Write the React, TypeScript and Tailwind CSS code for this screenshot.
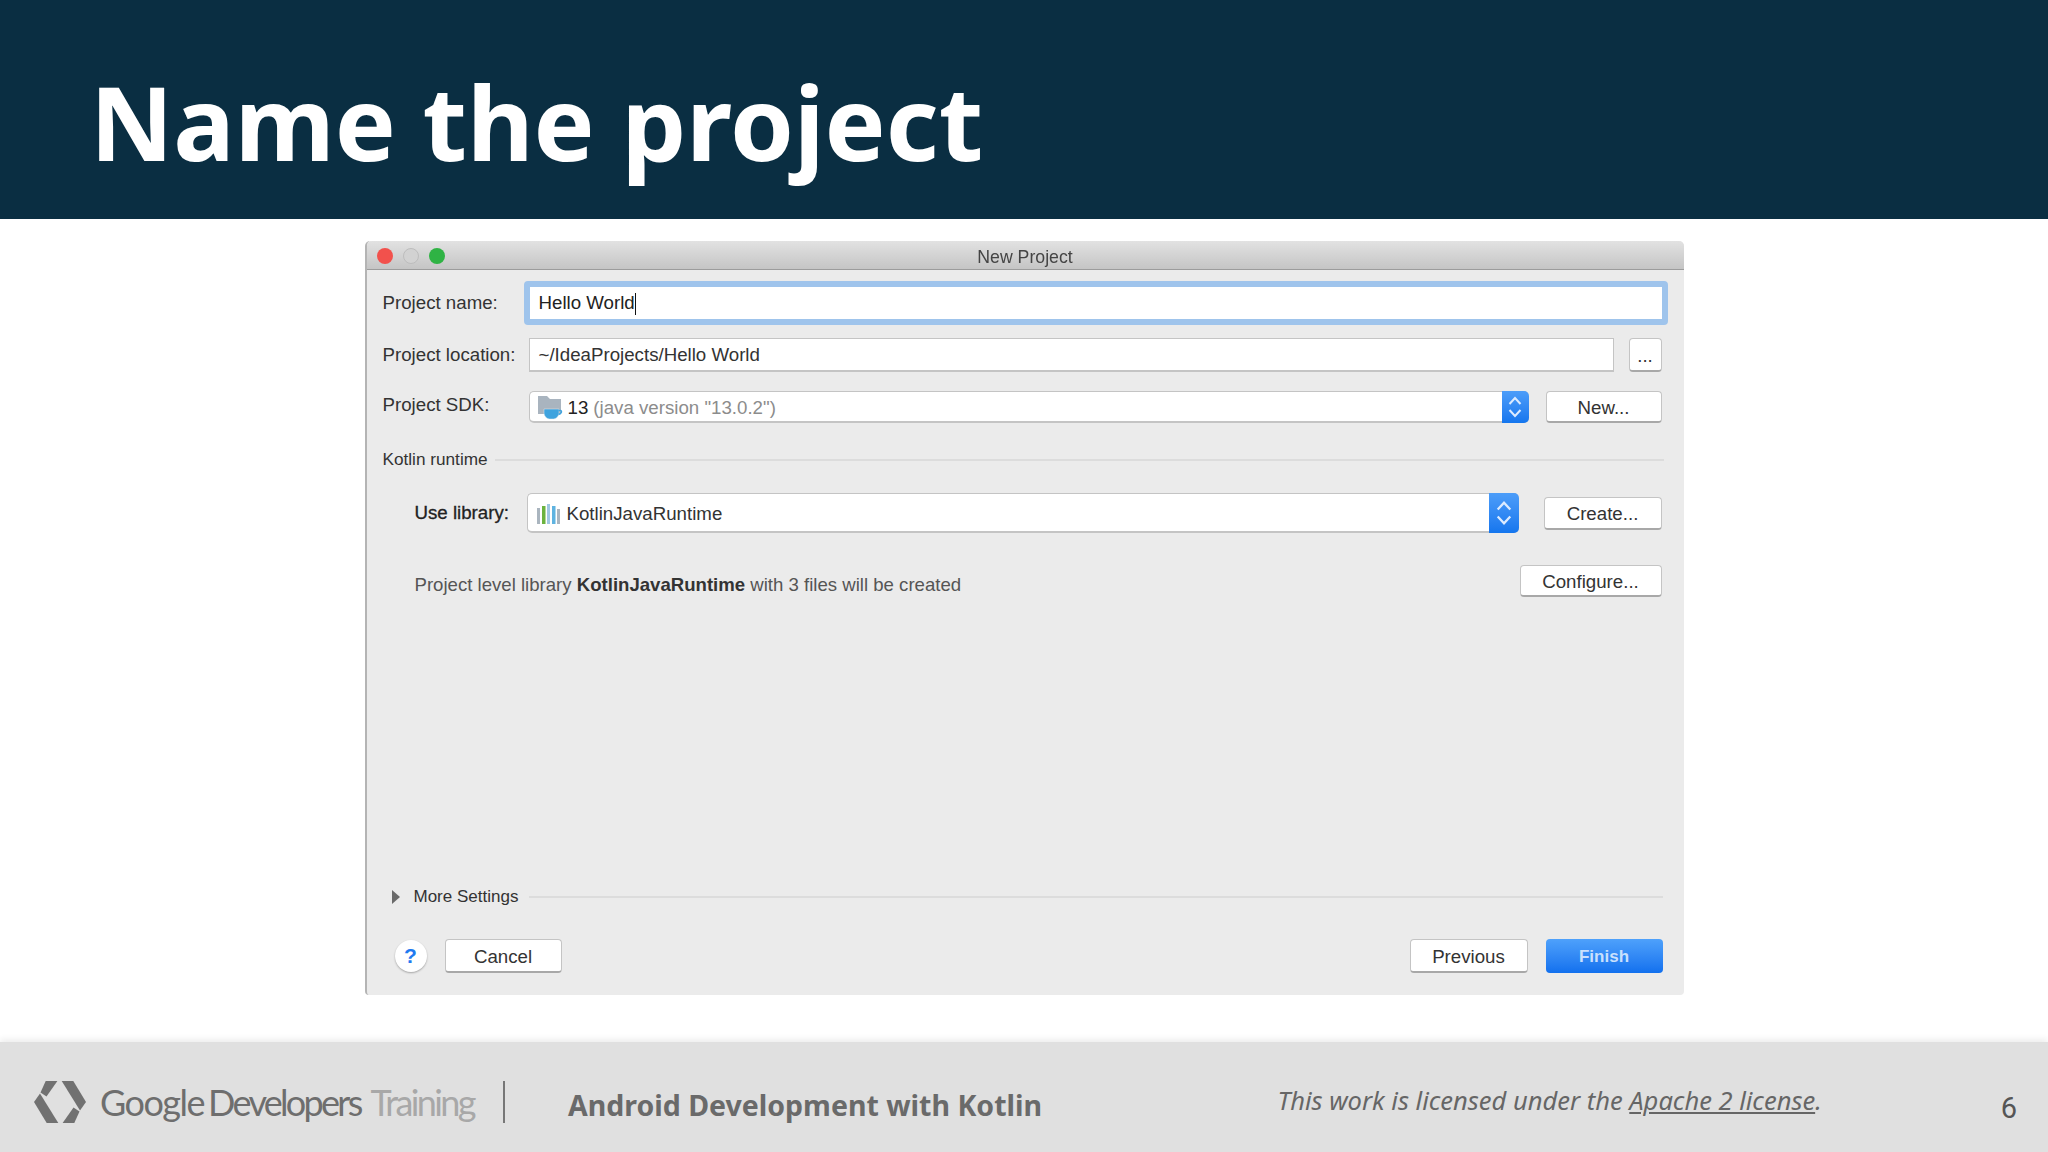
const dialogFont = "font-['Liberation_Sans',Arial,sans-serif]";
const slideFont = "font-['Noto_Sans','Open_Sans',sans-serif]";

function MacButton({ label, className }: { label: string; className: string }) {
  return (
    <button className={`flex items-center justify-center shrink-0 pt-[3px] rounded-[4px] bg-white border border-[#c4c4c4] border-b-[#a8a8a8] border-b-2 text-[18.7px] text-[#333] ${className}`}>
      {label}
    </button>
  );
}

function Stepper({ className, iconClass }: { className: string; iconClass: string }) {
  return (
    <div className={`flex items-center justify-center shrink-0 rounded-r-[5px] bg-gradient-to-b from-[#4c9df9] to-[#1476ee] ${className}`}>
      <svg viewBox="0 0 14 24" className={iconClass} fill="none" stroke="#dcebff" strokeWidth="2">
        <path d="M1.500 9 7 3l5.500 6" />
        <path d="M1.500 15 7 21l5.500-6" />
      </svg>
    </div>
  );
}

function FolderIcon() {
  return (
    <svg width="26" height="24" viewBox="0 0 26 24" className="shrink-0">
      <path d="M1 0h9l3 3h11v15H1z" fill="#a9b4bf" />
      <path d="M7 13h15v4c0 3-3 6-5.500 6h-4C10 23 7 20 7 17z" fill="#3fa3de" stroke="#ebebeb" strokeWidth="0.500" />
      <path d="M21.500 14.500h2c1.500 0 1.500 3.500-2 4" fill="none" stroke="#3fa3de" strokeWidth="1.500" />
    </svg>
  );
}

function LibraryIcon() {
  return (
    <svg width="24" height="20" viewBox="0 0 24 20" className="shrink-0">
      <rect x="0" y="4" width="3" height="16" fill="#aab5bf" />
      <rect x="5" y="2" width="3.500" height="18" fill="#6cb33f" />
      <rect x="10" y="0" width="3" height="20" fill="#9fc7e3" />
      <rect x="15" y="2" width="3.500" height="18" fill="#5fb3e0" />
      <rect x="20" y="5" width="3" height="15" fill="#aab5bf" />
    </svg>
  );
}

function GoogleDevLogo() {
  return (
    <svg width="52" height="42" viewBox="0 0 52 42" className="shrink-0">
      <path d="M11.700 0H23.400L12.500 15.500 6.500 11.500Z" fill="#717171" />
      <path d="M0 21 6 12.500 24.300 42H12.700Z" fill="#717171" />
      <path d="M52 21 46 29.500 27.700 0H39.300Z" fill="#717171" />
      <path d="M40.300 42H28.600L39.500 26.500 45.500 30.500Z" fill="#717171" />
    </svg>
  );
}

export default function App() {
  return (
    <div className="h-screen w-full flex flex-col bg-white overflow-hidden">
      {/* Title band */}
      <header className="h-[219px] shrink-0 bg-[#0a2e42] flex items-center pl-[90px]">
        <h1 className={`${slideFont} text-[102.5px] leading-none font-bold text-white pt-[23px]`}>Name the project</h1>
      </header>

      {/* Dialog screenshot */}
      <main className="flex-1 flex justify-center pt-[22px] min-h-0">
        <div className={`${dialogFont} blur-[0.4px] w-[1319px] h-[754px] flex flex-col bg-[#ebebeb] rounded-t-[5px] rounded-b-[4px] border-l-2 border-[#b4b4b4] text-[#333] text-[18.7px]`}>
          <div className="relative h-[29px] shrink-0 flex items-center justify-center pt-[5px] rounded-t-[5px] bg-gradient-to-b from-[#e2e2e2] to-[#c5c5c5] border-b border-[#9c9c9c] text-[17.7px] text-[#444]">
            <div className="absolute left-[10px] top-[7px] flex gap-[10px]">
              <span className="w-[16px] h-[16px] rounded-full bg-[#f2514c]" />
              <span className="w-[16px] h-[16px] rounded-full bg-[#d2d2d2] border border-[#bdbdbd]" />
              <span className="w-[16px] h-[16px] rounded-full bg-[#2fb344]" />
            </div>
            New Project
          </div>

          <div className="flex-1 flex flex-col pl-[16px] pr-[22px]">
            {/* Project name */}
            <div className="flex items-center mt-[11px] h-[44px]">
              <span className="w-[141px] shrink-0 pt-[1px]">Project name:</span>
              <div className="flex-1 h-[44px] mr-[-6px] flex items-center bg-white border-[6px] border-[#9fc4ec] rounded-[4px] pl-[9px] pt-[1px] text-[#222]">
                Hello World<span className="w-px h-[22px] bg-[#111]" />
              </div>
            </div>
            {/* Project location */}
            <div className="flex items-center mt-[13px] h-[34px]">
              <span className="w-[146px] shrink-0">Project location:</span>
              <div className="flex-1 h-[34px] flex items-center bg-white border border-[#c4c4c4] border-b-2 pl-[9px] pt-[1px] text-[#333]">~/IdeaProjects/Hello World</div>
              <MacButton label="..." className="w-[33px] h-[34px] ml-[15px]" />
            </div>
            {/* Project SDK */}
            <div className="flex items-center mt-[19px] h-[32px]">
              <span className="w-[146px] shrink-0 -mt-[3px]">Project SDK:</span>
              <div className="w-[1000px] h-[32px] flex items-center bg-white border border-[#c4c4c4] border-b-2 rounded-[5px] border-r-0">
                <div className="flex-1 flex items-center pl-[7px] gap-[5px] pt-[3px]">
                  <FolderIcon />
                  <span className="text-[#222]">13</span>
                  <span className="text-[#8c8c8c]">(java version "13.0.2")</span>
                </div>
                <Stepper className="w-[27px] h-[32px]" iconClass="w-[14px] h-[24px]" />
              </div>
              <MacButton label="New..." className="w-[116px] h-[32px] ml-[17px]" />
            </div>
            {/* Kotlin runtime separator */}
            <div className="flex items-center mt-[27px] h-[20px] text-[17.2px] mr-[-2px]">
              <span className="shrink-0 w-[112px]">Kotlin runtime</span>
              <div className="flex-1 h-[2px] bg-[#dcdcdc]" />
            </div>
            {/* Use library */}
            <div className="flex items-center mt-[23px] h-[40px]">
              <span className="w-[112px] shrink-0 ml-[32px] text-[#222] pt-[1px] [-webkit-text-stroke:0.3px_#222]">Use library:</span>
              <div className="w-[992px] h-[40px] flex items-center bg-white border border-[#c4c4c4] border-b-2 rounded-[5px] border-r-0">
                <div className="flex-1 flex items-center pl-[9px] gap-[6px] pt-[3px]">
                  <LibraryIcon />
                  <span className="text-[#333]">KotlinJavaRuntime</span>
                </div>
                <Stepper className="w-[30px] h-[40px]" iconClass="w-[16px] h-[28px]" />
              </div>
              <MacButton label="Create..." className="w-[118px] h-[33px] ml-[25px]" />
            </div>
            {/* Library info */}
            <div className="flex items-center justify-between mt-[32px] h-[32px] pl-[32px]">
              <span className="text-[#555] mt-[7px] text-[18.6px]">
                Project level library <b className="text-[#333]">KotlinJavaRuntime</b> with 3 files will be created
              </span>
              <MacButton label="Configure..." className="w-[142px] h-[32px]" />
            </div>

            <div className="flex-1" />

            {/* More settings */}
            <div className="flex items-center h-[20px] mb-[32px] mr-[-1px]">
              <span className="ml-[9px] w-0 h-0 border-y-[7px] border-y-transparent border-l-[8px] border-l-[#6a6a6a]" />
              <span className="ml-[14px] text-[17px] text-[#333]">More Settings</span>
              <div className="flex-1 h-[2px] bg-[#dcdcdc] ml-[11px]" />
            </div>
            {/* Footer buttons */}
            <div className="flex items-center mb-[22px] h-[34px] mr-[-1px]">
              <div className="ml-[12px] w-[32px] h-[32px] rounded-full bg-white shadow-[0_1px_2px_rgba(0,0,0,0.3)] flex items-center justify-center text-[#1f7af0] text-[21px] font-bold">?</div>
              <MacButton label="Cancel" className="w-[117px] h-[34px] ml-[18px]" />
              <div className="flex-1" />
              <MacButton label="Previous" className="w-[118px] h-[34px]" />
              <button className="w-[117px] h-[34px] ml-[18px] pt-[1px] rounded-[4px] bg-gradient-to-b from-[#4ea1fb] to-[#1170ee] text-[#c9e0fd] text-[17px] font-bold">Finish</button>
            </div>
          </div>
        </div>
      </main>

      {/* Slide footer */}
      <footer className={`${slideFont} h-[110px] shrink-0 bg-[#e0e0e0] shadow-[0_-3px_6px_rgba(0,0,0,0.07)] flex items-center pl-[34px] pt-[9px] text-[#666]`}>
        <GoogleDevLogo />
        <div className="ml-[14px] flex items-baseline font-['Lato',sans-serif] text-[36px] tracking-[-1.5px] whitespace-nowrap w-[403px] shrink-0">
          <span className="text-[#6e6e6e]">Google</span>
          <span className="ml-[4px] text-[#6e6e6e] tracking-[-2.7px]">Developers</span>
          <span className="ml-[10px] text-[#a8a8a8] tracking-[-2.6px]">Training</span>
        </div>
        <div className="w-[2px] h-[42px] bg-[#777]" />
        <span className="ml-[63px] mt-[7px] text-[28.5px] font-bold text-[#6a6a6a] whitespace-nowrap">Android Development with Kotlin</span>
        <div className="flex-1" />
        <span className="text-[25.5px] italic text-[#666] whitespace-nowrap mb-[2px]">
          This work is licensed under the <span className="underline">Apache 2 license</span>.
        </span>
        <span className="ml-[179px] mr-[31px] mt-[15px] text-[29px] text-[#555] font-['Roboto',sans-serif]">6</span>
      </footer>
    </div>
  );
}
